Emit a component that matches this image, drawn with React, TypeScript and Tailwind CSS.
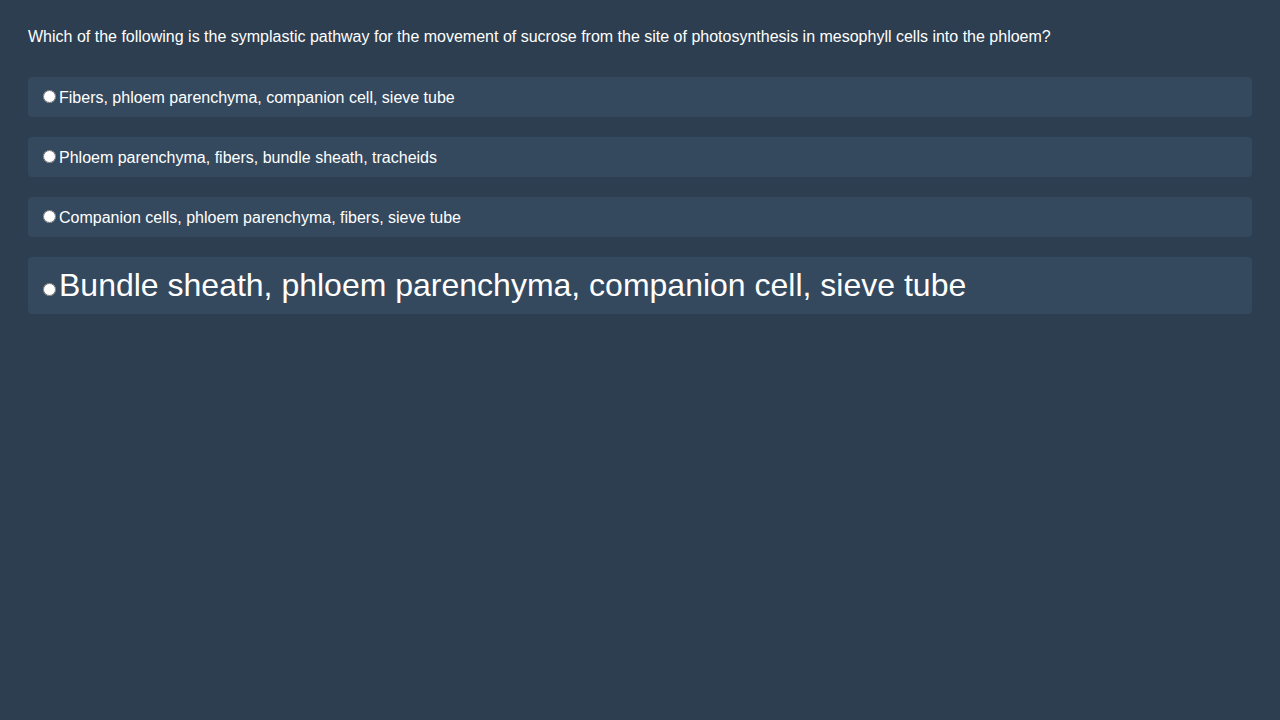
const OPTIONS = [
  { label: "Fibers, phloem parenchyma, companion cell, sieve tube", big: false },
  { label: "Phloem parenchyma, fibers, bundle sheath, tracheids", big: false },
  { label: "Companion cells, phloem parenchyma, fibers, sieve tube", big: false },
  { label: "Bundle sheath, phloem parenchyma, companion cell, sieve tube", big: true },
];

export default function App() {
  return (
    <div className="min-h-[720px] w-full bg-[#2c3e50] p-7 font-['Liberation_Sans',Arial,sans-serif] leading-[normal] text-white">
      <p className="mb-[31px] text-[16px]">
        Which of the following is the symplastic pathway for the movement of sucrose from the site of
        photosynthesis in mesophyll cells into the phloem?
      </p>
      <div className="flex flex-col gap-5">
        {OPTIONS.map((o) => (
          <label
            key={o.label}
            className={`block rounded bg-[#34495e] px-2.5 py-2.5 ${o.big ? "text-[32px]" : "text-[16px]"}`}
          >
            <input type="radio" name="answer" className="ml-[5px] mr-[3px] mt-[3px]" />
            {o.label}
          </label>
        ))}
      </div>
    </div>
  );
}
